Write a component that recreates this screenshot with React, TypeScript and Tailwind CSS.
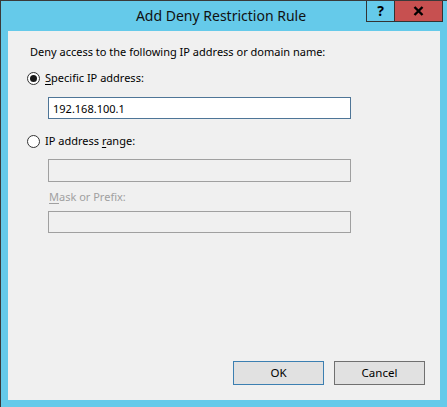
import React from "react";

function Radio({ checked }: { checked?: boolean }) {
  return (
    <span className="flex h-[13px] w-[13px] shrink-0 items-center justify-center rounded-full border border-[#333333] bg-white">
      {checked && <span className="h-[7px] w-[7px] rounded-full bg-[#1a1a1a]" />}
    </span>
  );
}

export default function App() {
  const font = { fontFamily: '"Segoe UI", "Noto Sans", "Open Sans", sans-serif' };
  return (
    <div
      className="relative flex h-[407px] w-[447px] flex-col overflow-hidden border-l border-t border-[#3a3a3a] bg-[#65caea] text-[11px] text-black"
      style={font}
    >
      <div className="flex h-[30px] shrink-0 items-center justify-center pb-[1px] text-[14px] text-[#111]">
        <span className="ml-[-6px]">Add Deny Restriction Rule</span>
      </div>
      <div className="absolute right-[4px] top-[-1px] flex h-[22px]">
        <div className="flex w-[29px] items-center justify-center border border-[#333] bg-[#65caea] text-[14px] font-bold leading-none">
          ?
        </div>
        <div className="ml-[-1px] flex w-[49px] items-center justify-center border border-[#333] bg-[#c75050]">
          <svg width="11" height="10" viewBox="0 0 11 10">
            <path d="M1.5 1 L9.5 9 M9.5 1 L1.5 9" stroke="#000" strokeWidth="2.4" />
          </svg>
        </div>
      </div>
      <div className="ml-[7px] flex h-[369px] w-[432px] flex-col bg-[#f0f0f0] px-[22px] pt-[13px]">
        <div className="leading-[16px]">Deny access to the following IP address or domain name:</div>
        <div className="ml-[-3px] mt-[10px] flex items-center gap-[5px] leading-[16px]">
          <Radio checked />
          <span>
            <span className="underline underline-offset-2">S</span>pecific IP address:
          </span>
        </div>
        <div className="ml-[18px] mt-[11px] flex h-[22px] w-[303px] items-center border border-[#4e7597] bg-white px-[4px] leading-none">
          192.168.100.1
        </div>
        <div className="ml-[-3px] mt-[14px] flex items-center gap-[5px] leading-[16px]">
          <Radio />
          <span>
            IP address <span className="underline underline-offset-2">r</span>ange:
          </span>
        </div>
        <div className="ml-[18px] mt-[10px] h-[23px] w-[303px] border border-[#a0a0a0] bg-[#f0f0f0]" />
        <div className="ml-[19px] mt-[7px] leading-[16px] text-[#a0a0a0]">
          <span className="underline underline-offset-2">M</span>ask or Prefix:
        </div>
        <div className="ml-[18px] mt-[6px] h-[22px] w-[303px] border border-[#a0a0a0] bg-[#f0f0f0]" />
        <div className="mt-auto mb-[15px] flex justify-end gap-[10px]">
          <button className="h-[24px] w-[91px] border border-[#3c7fb1] bg-[#e1e1e1] text-[11.5px]" style={font}>
            OK
          </button>
          <button className="mr-[-7px] h-[24px] w-[91px] border border-[#707070] bg-[#e1e1e1] text-[11.5px]" style={font}>
            Cancel
          </button>
        </div>
      </div>
    </div>
  );
}
